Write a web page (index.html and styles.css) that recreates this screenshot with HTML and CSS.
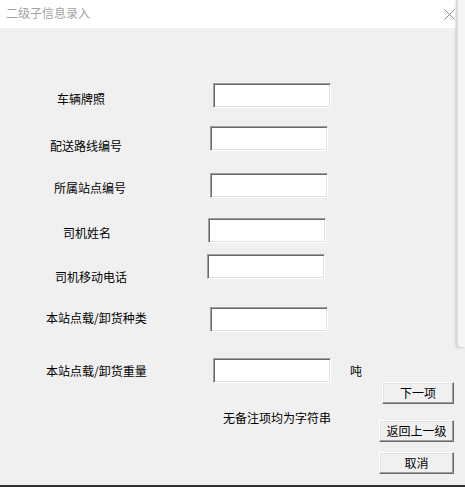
FILE: index.html
```html
<!DOCTYPE html>
<html lang="zh-CN">
<head>
<meta charset="utf-8">
<title>二级子信息录入</title>
<link rel="stylesheet" href="styles.css">
</head>
<body>
<div class="dialog">
  <div class="titlebar">
    <span class="title">二级子信息录入</span>
    <svg class="close" width="11" height="11" viewBox="0 0 11 11"><path d="M0.5 0.5 L10.5 10.5 M10.5 0.5 L0.5 10.5" stroke="#8a8a8a" stroke-width="1" fill="none"/></svg>
  </div>
  <div class="content">
    <div class="row r1"><span class="lbl">车辆牌照</span><input class="field" type="text"></div>
    <div class="row r2"><span class="lbl">配送路线编号</span><input class="field" type="text"></div>
    <div class="row r3"><span class="lbl">所属站点编号</span><input class="field" type="text"></div>
    <div class="row r4"><span class="lbl">司机姓名</span><input class="field" type="text"></div>
    <div class="row r5"><span class="lbl">司机移动电话</span><input class="field" type="text"></div>
    <div class="row r6"><span class="lbl">本站点载/卸货种类</span><input class="field" type="text"></div>
    <div class="row r7"><span class="lbl">本站点载/卸货重量</span><input class="field" type="text"><span class="unit">吨</span></div>
    <div class="footer">
      <p class="note">无备注项均为字符串</p>
      <div class="actions">
        <button class="btn btn-next">下一项</button>
        <button class="btn btn-back">返回上一级</button>
        <button class="btn btn-cancel">取消</button>
      </div>
    </div>
  </div>
  <div class="side-edge"></div>
</div>
<div class="taskbar"></div>
</body>
</html>
```

FILE: styles.css
```css
html, body {
  margin: 0;
  padding: 0;
}
body {
  width: 465px;
  height: 487px;
  overflow: hidden;
  background: #f0f0f0;
  font-family: "Noto Sans CJK SC", "Noto Sans", sans-serif;
  font-size: 12px;
  color: #000;
}
.dialog {
  position: relative;
  width: 465px;
  height: 485px;
  background: #f0f0f0;
}
.titlebar {
  height: 28px;
  background: #fff;
  display: flex;
  align-items: center;
  justify-content: space-between;
  padding: 0 10px 2px 6px;
  box-sizing: border-box;
}
.title {
  font-size: 12px;
  line-height: 16px;
  color: #a3a3a3;
}
.close {
  display: block;
  margin-top: 2px;
}
.content {
  display: flex;
  flex-direction: column;
}
.row {
  display: flex;
  align-items: flex-start;
  height: 25px;
}
.lbl {
  flex: none;
  box-sizing: border-box;
  line-height: 16px;
  white-space: nowrap;
}
.field {
  flex: none;
  width: 118px;
  height: 25px;
  margin: 0;
  padding: 0;
  box-sizing: border-box;
  background: #fff;
  border: 1px solid;
  border-color: #a0a0a0 #fff #fff #a0a0a0;
  box-shadow: inset 1px 1px 0 #696969, inset -1px -1px 0 #e3e3e3;
  outline: none;
}
.unit {
  margin-left: 19px;
  margin-top: 5px;
  line-height: 16px;
}
.r1 { margin-top: 55px; }
.r1 .lbl { width: 213px; padding-left: 57px; margin-top: 8px; }
.r2 { margin-top: 18px; }
.r2 .lbl { width: 210px; padding-left: 50px; margin-top: 12px; }
.r3 { margin-top: 22px; }
.r3 .lbl { width: 210px; padding-left: 54px; margin-top: 7px; }
.r4 { margin-top: 20px; }
.r4 .lbl { width: 208px; padding-left: 63px; margin-top: 7px; }
.r5 { margin-top: 11px; }
.r5 .lbl { width: 207px; padding-left: 55px; margin-top: 15px; }
.r6 { margin-top: 28px; }
.r6 .lbl { width: 210px; padding-left: 46px; margin-top: 3px; }
.r7 { margin-top: 26px; }
.r7 .lbl { width: 213px; padding-left: 46px; margin-top: 5px; }
.footer {
  display: flex;
  align-items: flex-start;
  margin-top: -1px;
}
.note {
  margin: 28px 0 0 223px;
  line-height: 16px;
}
.actions {
  margin-left: auto;
  margin-right: 11px;
  display: flex;
  flex-direction: column;
  align-items: flex-end;
}
.btn {
  height: 22px;
  padding: 0;
  margin: 0;
  font-family: "Noto Sans CJK SC", "Noto Sans", sans-serif;
  font-size: 12px;
  line-height: 16px;
  color: #000;
  background: #f0f0f0;
  border: 1px solid;
  border-color: #fff #696969 #696969 #fff;
  box-shadow: inset -1px -1px 0 #a0a0a0, inset 1px 1px 0 #e3e3e3;
  box-sizing: border-box;
}
.btn-next { width: 72px; }
.btn-back { width: 75px; margin-top: 16px; }
.btn-cancel { width: 75px; margin-top: 10px; }
.side-edge {
  position: absolute;
  top: 0;
  right: 0;
  width: 7px;
  height: 347px;
  background: #f6f6f6;
  border-left: 2px solid #dcdcdc;
  border-bottom-left-radius: 4px;
  box-shadow: -1px 1px 2px rgba(0, 0, 0, 0.12);
}
.taskbar {
  height: 2px;
  background: #2b302a;
}
```
